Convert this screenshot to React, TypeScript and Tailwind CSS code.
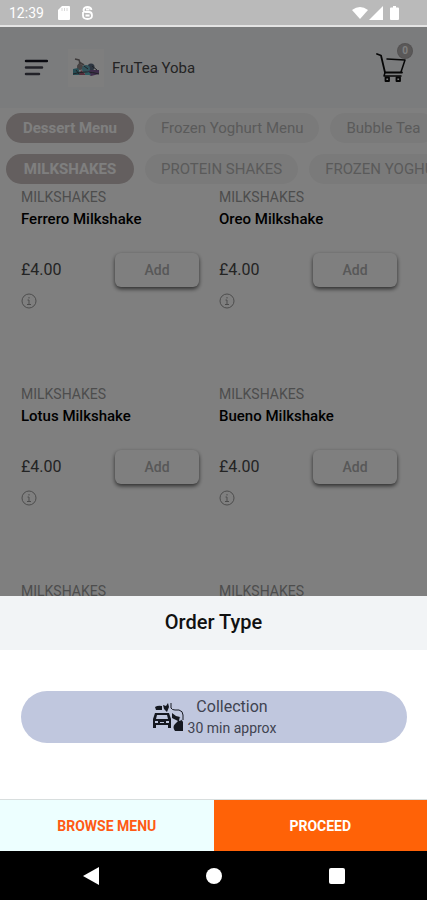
import React from "react";

const menus = ["Dessert Menu", "Frozen Yoghurt Menu", "Bubble Tea"];
const categories = ["MILKSHAKES", "PROTEIN SHAKES", "FROZEN YOGHURT"];
const products = [
  "Ferrero Milkshake",
  "Oreo Milkshake",
  "Lotus Milkshake",
  "Bueno Milkshake",
];

function StatusBar() {
  return (
    <div className="flex h-[27px] shrink-0 items-center border-b-2 border-[#e4e4e4] bg-[#bababa] pr-7 pl-[9px] text-white">
      <span className="text-sm leading-4">12:39</span>
      <svg className="ml-3.5 h-[14px] w-3" viewBox="0 0 12 14" fill="currentColor" aria-hidden="true">
        <path d="M4 0h7q1 0 1 1v12q0 1-1 1H1q-1 0-1-1V4z" />
        <path d="M4 2v3M6.500 2v3M9 2v3" stroke="#d8d8d8" />
      </svg>
      <svg className="ml-3 h-[14px] w-[11px]" viewBox="0 0 11 14" fill="none" stroke="currentColor" strokeWidth="1.800" aria-hidden="true">
        <path d="M9.500 4Q9 1 5.500 1T1.500 4Q1.500 6 4 6h3q3 0 3 3.500T5.500 13 1 9.500V6M4 3.500h3.500M3.500 9.500h4" />
      </svg>
      <svg className="ml-auto h-3 w-4" viewBox="0 0 16 12" fill="currentColor" aria-hidden="true">
        <path d="M0 3Q8-3 16 3L8 12z" />
      </svg>
      <svg className="ml-px h-[14px] w-[14px]" viewBox="0 0 14 14" fill="currentColor" aria-hidden="true">
        <path d="M14 0v14H0z" />
      </svg>
      <svg className="ml-[7px] h-[14px] w-[9px]" viewBox="0 0 9 14" fill="currentColor" aria-hidden="true">
        <path d="M3 0h3v1.500h2q1 0 1 1V13q0 1-1 1H1q-1 0-1-1V2.500q0-1 1-1h2z" />
      </svg>
    </div>
  );
}

function Logo() {
  return (
    <svg className="h-[38px] w-9" viewBox="0 0 36 38" role="img" aria-label="FruTea Yoba">
      <path fill="#fdfdfd" d="M0 0h36v38H0z" />
      <path d="M7 10l4 1 1 3-2 3M11 13l5 3" stroke="#7d7677" strokeWidth="1.500" fill="none" />
      <circle cx="12" cy="18" r="3" fill="#8d8585" />
      <circle cx="23" cy="18" r="3.500" fill="#5a6b80" />
      <circle cx="18" cy="20" r="4" fill="#62a9b8" />
      <path d="M5 20l5-1 3 7H5z" fill="#4c9aa8" />
      <path d="M13 21l5 5h-7z" fill="#a85a74" />
      <path d="M22 21h9v4l-8 2-5-3z" fill="#7d5a95" />
      <path d="M5 25q13-4 26 0M8 21l3 4M24 17l5 4M16 17l4 3" stroke="#3f444c" fill="none" />
      <path d="M17 24l4-1 2 3h-6z" fill="#5cbac5" />
    </svg>
  );
}

function Header() {
  return (
    <header className="flex h-[81px] items-center bg-[#f6f8fb] pr-[19px] pl-6">
      <button type="button" aria-label="Open menu">
        <svg className="h-5 w-6" viewBox="0 0 24 20" fill="none" strokeWidth="2.500" strokeLinecap="round" aria-hidden="true">
          <path d="M2 3h21" stroke="#151520" />
          <path d="M2 9.500h16M2 16h13" stroke="#444450" />
        </svg>
      </button>
      <div className="ml-5">
        <Logo />
      </div>
      <h1 className="ml-2 text-[15px] leading-5 text-[#484848]">FruTea Yoba</h1>
      <button type="button" aria-label="Basket, 0 items" className="relative ml-auto h-10 w-8">
        <svg className="h-10 w-8" viewBox="0 0 32 40" fill="none" stroke="#0c0c0c" strokeWidth="1.800" strokeLinecap="round" strokeLinejoin="round" aria-hidden="true">
          <path d="M1 6l4 1.500 4 17h17" />
          <path d="M11 11l18 1-4 12M9 24.500L8 28h17" strokeWidth="1.500" />
          <path d="M9.500 29.500h3.500v3.500H9.500zM20.500 29.500h3.500v3.500h-3.500z" />
        </svg>
        <span className="absolute -top-1 -right-1 flex size-[14px] items-center justify-center rounded-full bg-[#b4b1b1] text-[10px] leading-none font-bold text-white ring-1 ring-[#a8a4a4]">
          0
        </span>
      </button>
    </header>
  );
}

function Tabs({ items, label }: { items: string[]; label: string }) {
  return (
    <nav aria-label={label} className="flex gap-[11px] overflow-hidden">
      {items.map((item, i) => (
        <button
          key={item}
          type="button"
          className={
            i === 0
              ? "h-[30px] w-32 shrink-0 rounded-full bg-[#c8bfbe] text-[15px] leading-5 font-bold whitespace-nowrap text-white"
              : "h-[30px] shrink-0 rounded-full bg-[#f5f5f5] px-4 text-[15px] leading-5 whitespace-nowrap text-[#b4b4b4]"
          }
        >
          {item}
        </button>
      ))}
    </nav>
  );
}

function CategoryName() {
  return <p className="text-sm leading-5 text-[#9a9a9a]">MILKSHAKES</p>;
}

function Product({ name }: { name: string }) {
  return (
    <article className="flex h-[197px] flex-col">
      <CategoryName />
      <h2 className="mt-0.5 text-[15px] leading-5 font-medium text-black">{name}</h2>
      <div className="mt-6 flex items-center justify-between">
        <span className="text-base leading-5 text-[#484848]">£4.00</span>
        <button type="button" className="h-[34px] w-[84px] rounded-md bg-white text-sm font-medium text-[#b0b0b0] shadow-[0_2px_4px_rgba(0,0,0,0.65)]">
          Add
        </button>
      </div>
      <button type="button" aria-label={"About " + name} className="mt-1.5 size-4">
        <svg className="size-4" viewBox="0 0 16 16" fill="none" stroke="#999" aria-hidden="true">
          <circle cx="8" cy="8" r="7" />
          <path d="M8 4v1.500M6.500 7H8v4.500M6 11.500h4" />
        </svg>
      </button>
    </article>
  );
}

function CollectionIcon() {
  return (
    <svg className="h-[30px] w-8" viewBox="0 0 32 30" fill="#151820" aria-hidden="true">
      <path d="M3 5q3-2 7-1v4H4zM11 3l3 1 2-3 1 4-2 5-3-3z" />
      <path d="M3 11h14l2 6v9h-3v-3H4v3H1v-9z" />
      <path d="M5 13h10l1 4H4zM3 19h3v2H3zM14 19h3v2h-3zM8 20h4v1H8z" fill="#c0c7de" />
      <path d="M19 1v5q1 2 4 2h4q4 1 4 5v5" fill="none" stroke="#151820" />
      <path d="M20 11l4 3 4 1 3 5v9h-8q-3-4 0-7l3-3-6-3z" />
      <path d="M28 14l2 4-3 1z" fill="#c0c7de" />
    </svg>
  );
}

function OrderSheet() {
  return (
    <section role="dialog" aria-labelledby="order-type" className="absolute inset-x-0 bottom-0 bg-white">
      <h2 id="order-type" className="flex h-[54px] items-center justify-center bg-[#f2f4f6] pb-0.5 text-xl leading-6 font-medium text-[#111]">
        Order Type
      </h2>
      <div className="pt-[41px] pr-5 pb-14 pl-[21px]">
        <button type="button" className="flex h-[52px] w-full items-center justify-center gap-1 rounded-full bg-[#c0c7de] text-[#3f4350]">
          <CollectionIcon />
          <span className="flex flex-col items-center">
            <span className="text-base leading-[22px]">Collection</span>
            <span className="text-sm leading-5">30 min approx</span>
          </span>
        </button>
      </div>
      <div className="grid h-[52px] grid-cols-2 border-t border-[#d8dede] text-sm font-bold">
        <button type="button" className="bg-[#edffff] text-[#ff5a14]">BROWSE MENU</button>
        <button type="button" className="bg-[#ff6207] text-white">PROCEED</button>
      </div>
    </section>
  );
}

function NavigationBar() {
  return (
    <nav aria-label="System navigation" className="flex h-[49px] shrink-0 items-center justify-center gap-[107px] bg-black text-white">
      <button type="button" aria-label="Back">
        <svg className="h-[18px] w-4" viewBox="0 0 16 18" fill="currentColor" aria-hidden="true">
          <path d="M16 0v18L0 9z" />
        </svg>
      </button>
      <button type="button" aria-label="Home" className="size-4 rounded-full bg-white" />
      <button type="button" aria-label="Recent apps" className="size-4 rounded-xs bg-white" />
    </nav>
  );
}

export default function App() {
  return (
    <div className="flex h-screen flex-col overflow-hidden bg-white font-['Roboto',sans-serif]">
      <StatusBar />
      <div className="relative min-h-0 flex-1 overflow-hidden">
        <Header />
        <div className="flex flex-col gap-[11px] pt-[5px] pl-1.5">
          <Tabs items={menus} label="Menus" />
          <Tabs items={categories} label="Categories" />
        </div>
        <main className="grid grid-cols-2 gap-x-5 pt-[3px] pr-[30px] pl-[21px]">
          {products.map((name) => (
            <Product key={name} name={name} />
          ))}
          <CategoryName />
          <CategoryName />
        </main>
        <div className="absolute inset-0 bg-black/50" />
        <OrderSheet />
      </div>
      <NavigationBar />
    </div>
  );
}
